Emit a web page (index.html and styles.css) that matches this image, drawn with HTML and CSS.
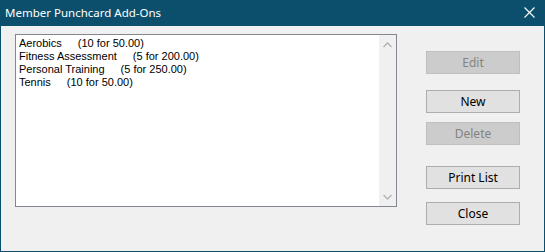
FILE: index.html
```html
<!DOCTYPE html>
<html lang="en">
<head>
  <meta charset="UTF-8">
  <title>Member Punchcard Add-Ons</title>
  <link rel="stylesheet" href="styles.css">
</head>
<body>

  <div class="window">
    <div class="titlebar">
      <span class="title">Member Punchcard Add-Ons</span>
      <svg class="close-icon" width="11" height="11" viewBox="0 0 11 11">
        <path d="M0.5 0.5 L10.5 10.5 M10.5 0.5 L0.5 10.5" stroke="#fff" stroke-width="1.1" fill="none"/>
      </svg>
    </div>

    <div class="dialog-body">
      <div class="listbox">
        <ul class="items">
          <li><span class="name">Aerobics</span><span>(10 for 50.00)</span></li>
          <li><span class="name">Fitness Assessment</span><span>(5 for 200.00)</span></li>
          <li><span class="name">Personal Training</span><span>(5 for 250.00)</span></li>
          <li><span class="name">Tennis</span><span>(10 for 50.00)</span></li>
        </ul>
        <div class="scrollbar">
          <svg width="9" height="6" viewBox="0 0 9 6">
            <path d="M0.5 5 L4.5 1 L8.5 5" stroke="#b4b4b4" stroke-width="1.5" fill="none"/>
          </svg>
          <svg width="9" height="6" viewBox="0 0 9 6">
            <path d="M0.5 1 L4.5 5 L8.5 1" stroke="#b4b4b4" stroke-width="1.5" fill="none"/>
          </svg>
        </div>
      </div>

      <div class="buttons">
        <button class="btn" disabled>Edit</button>
        <button class="btn btn-new">New</button>
        <button class="btn btn-delete" disabled>Delete</button>
        <button class="btn btn-print">Print List</button>
        <button class="btn btn-close">Close</button>
      </div>
    </div>
  </div>

</body>
</html>
```

FILE: styles.css
```css
body {
  margin: 0;
  background-color: #f0f0f0;
}

.window {
  width: 545px;
  height: 252px;
  box-sizing: border-box;
  border: 1px solid #0b4f6c;
  border-top: none;
  background-color: #f0f0f0;
}

.titlebar {
  height: 26px;
  margin: 0 -1px;
  background-color: #0b4f6c;
  display: flex;
  align-items: center;
  justify-content: space-between;
  padding: 0 10px 0 5px;
}

.title {
  color: white;
  font-family: "Noto Sans", sans-serif;
  font-size: 11.5px;
  line-height: 16px;
  padding-bottom: 1px;
}

.close-icon {
  display: block;
  margin-bottom: 1px;
}

.dialog-body {
  display: flex;
  align-items: flex-start;
  padding: 8px 0 0 14px;
}

.listbox {
  width: 382px;
  height: 173px;
  box-sizing: border-box;
  border: 1px solid #828790;
  background-color: white;
  display: flex;
  justify-content: space-between;
}

.items {
  list-style: none;
  margin: 0;
  padding: 2px 0 0 3px;
  font-family: "Liberation Sans", Arial, sans-serif;
  font-size: 11px;
  line-height: 13px;
  color: black;
}

.items li {
  display: flex;
  gap: 16px;
  white-space: nowrap;
}

.scrollbar {
  width: 17px;
  background-color: #f0f0f0;
  display: flex;
  flex-direction: column;
  justify-content: space-between;
  align-items: center;
  padding: 7px 0 6px;
  box-sizing: border-box;
}

.scrollbar svg {
  display: block;
}

.buttons {
  display: flex;
  flex-direction: column;
  margin-left: 29px;
  padding-top: 17px;
}

.btn {
  width: 94px;
  height: 23px;
  box-sizing: border-box;
  border: 1px solid #adadad;
  background-color: #e1e1e1;
  color: black;
  font-family: "Noto Sans", sans-serif;
  font-size: 12px;
  padding: 0 0 1px;
  margin: 0;
}

.btn:disabled {
  background-color: #cccccc;
  border-color: #bfbfbf;
  color: #838383;
}

.btn-new {
  margin-top: 16px;
}

.btn-delete {
  margin-top: 9px;
}

.btn-print {
  margin-top: 21px;
}

.btn-close {
  margin-top: 13px;
}
```
